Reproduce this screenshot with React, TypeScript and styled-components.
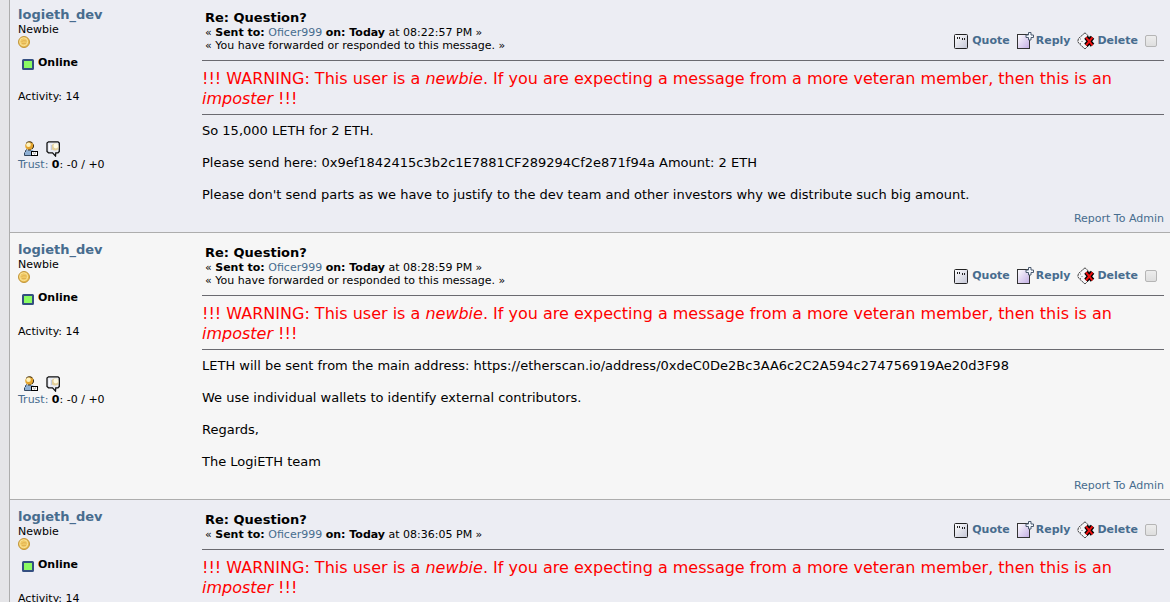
import React from 'react';
import styled, { createGlobalStyle } from 'styled-components';

const GlobalStyle = createGlobalStyle`
  html { overflow: hidden; }
  body {
    margin: 0;
    background: #e5e5e8;
    color: #000;
    font-family: Verdana, "DejaVu Sans", sans-serif;
    font-size: 13px;
    line-height: 16px;
  }
`;

const Page = styled.main`
  height: 100vh;
  overflow: hidden;
  padding-left: 9px;
`;

const Thread = styled.div`
  margin-top: -2px;
  border-left: 1px solid #adadad;
`;

const Post = styled.article<{ $alt?: boolean }>`
  display: flex;
  padding: 9px 6px 0 8px;
  background: ${(p) => (p.$alt ? '#f6f6f6' : '#ecedf3')};
  border-bottom: 1px solid #adadad;
`;

const Link = styled.a`
  color: #476c8e;
  text-decoration: none;
`;

const Poster = styled.aside`
  flex: 0 0 184px;
  font-size: 11px;
  line-height: 13px;
`;

const PosterName = styled(Link)`
  display: block;
  font-size: 13px;
  font-weight: bold;
  line-height: 16px;
`;

const Line = styled.div`
  line-height: 14px;
`;

const Rank = styled.div`
  line-height: 13px;
`;

const Coin = styled.svg`
  display: block;
`;

const Status = styled.div`
  display: flex;
  align-items: center;
  gap: 4px;
  margin: 7px 0 20px;
  padding-left: 4px;
  font-weight: bold;
  line-height: 14px;

  svg {
    margin-top: 4px;
  }
`;

const ProfileIcons = styled.div`
  display: flex;
  gap: 7px;
  margin: 37px 0 1px;
  padding-left: 5px;

  a, svg {
    display: block;
  }
`;

const Content = styled.div`
  flex: 1;
  min-width: 0;
`;

const Header = styled.header`
  display: flex;
  justify-content: space-between;
  align-items: flex-end;
  padding: 3px 0 8px 3px;
  border-bottom: 1px solid #6a6a70;
`;

const Title = styled.h2`
  margin: 0;
  font-size: 13px;
  line-height: 16px;
`;

const Meta = styled.div`
  font-size: 11px;
  line-height: 13px;
`;

const Actions = styled.div`
  display: flex;
  align-items: center;
  margin-bottom: 2px;
  font-size: 11px;
  font-weight: bold;
`;

const Action = styled(Link)`
  display: flex;
  align-items: center;
  gap: 2px;
  margin-right: 7px;

  svg {
    flex: none;
  }
`;

const Check = styled.input`
  appearance: none;
  box-sizing: border-box;
  width: 12px;
  height: 12px;
  margin: 0 7px 0 0;
  border: 1px solid #b5b5b5;
  border-radius: 2px;
  background: linear-gradient(#ededed, #dedede);
`;

const Warning = styled.p`
  margin: 0;
  padding: 8px 0 5px;
  border-bottom: 1px solid #6a6a70;
  color: #f00;
  font-size: 16px;
  line-height: 20px;
`;

const Body = styled.div`
  padding-top: 8px;

  p {
    margin: 0 0 16px;
  }

  p:last-child {
    margin-bottom: 8px;
  }
`;

const Report = styled.footer`
  padding-bottom: 5px;
  text-align: right;
  font-size: 11px;
`;

const CoinIcon = () => (
  <Coin width="12" height="12" viewBox="0 0 12 12" aria-hidden="true">
    <circle cx="6" cy="6" r="5.5" fill="#e9b94c" stroke="#c0963c" />
    <circle cx="5.7" cy="5.7" r="4" fill="#f0c964" stroke="#f9e39a" />
    <path d="M3.500 5.500q2-1.500 5-.5M4 7.500h4" fill="none" stroke="#e2b252" />
  </Coin>
);

const OnlineIcon = () => (
  <svg width="12" height="11" viewBox="0 0 12 11" aria-hidden="true">
    <rect x="1" y="1" width="10" height="9" rx="0.5" fill="#8bfb62" stroke="#344f80" strokeWidth="2" />
  </svg>
);

const ProfileIcon = () => (
  <svg width="16" height="16" viewBox="0 0 16 16" aria-hidden="true">
    <path d="M1.500 14.500V12l1.500-2.500 2-1h4l3 2.500v3.500z" fill="#8fb0d4" />
    <path d="M1.500 11.500v3h7M2.500 11V9.500l1.500-1" fill="none" stroke="#33465c" />
    <circle cx="6.500" cy="4.800" r="4.300" fill="#e3a32c" />
    <path d="M3 2.500A4.300 4.300 0 0 1 9.500 2M10.500 3.500A4.300 4.300 0 0 1 9 8M5 9h3" fill="none" stroke="#3a3222" />
    <circle cx="5.500" cy="3.800" r="2.300" fill="#fff3bd" />
    <rect x="8.500" y="10.500" width="6" height="4" fill="#fff" stroke="#000" />
    <path d="M10 12h1M12 12h1M11 13h1" stroke="#999" />
  </svg>
);

const MessageIcon = () => (
  <svg width="15" height="16" viewBox="0 0 15 16" aria-hidden="true">
    <path d="M2.500.8h9.500l1.300 1.200v8.500L12 11.800H9.800L9.500 15 6.500 11.800H2.500L1 10.500V2z" fill="#e9ebf3" stroke="#111" strokeWidth="1.300" />
    <circle cx="9" cy="6" r="3.600" fill="#e3cf9a" />
    <circle cx="9.800" cy="5" r="2.400" fill="#fffbe5" />
    <path d="M3.500 3.500v6" fill="none" stroke="#fff" />
    <path d="M5.500 4v5" fill="none" stroke="#c5cad8" />
  </svg>
);

const QuoteIcon = () => (
  <svg width="16" height="16" viewBox="0 0 16 16" aria-hidden="true">
    <defs>
      <linearGradient id="quoteFill" x1="0" y1="0" x2="1" y2="1">
        <stop offset="0" stopColor="#fff" />
        <stop offset="1" stopColor="#c4c6d6" />
      </linearGradient>
    </defs>
    <rect x=".5" y="1.500" width="13" height="14" rx="1" fill="url(#quoteFill)" stroke="#222" />
    <path d="M3.500 4v2M5.500 4v2M8.500 5v2M10.500 5v2" stroke="#222" />
  </svg>
);

const ReplyIcon = () => (
  <svg width="17" height="18" viewBox="0 0 17 18" aria-hidden="true">
    <defs>
      <linearGradient id="replyFill" x1="0" y1="0" x2="1" y2="1">
        <stop offset="0" stopColor="#fff" />
        <stop offset="1" stopColor="#c3aee4" />
      </linearGradient>
    </defs>
    <rect x=".5" y="2.500" width="12" height="14" fill="url(#replyFill)" stroke="#333" />
    <path d="M11.500.5h2.500v2.500h2.500v2.500h-2.500V8h-2.500V5.500H9V3h2.500z" fill="#f4f8ff" stroke="#4b5a6e" />
  </svg>
);

const DeleteIcon = () => (
  <svg width="18" height="18" viewBox="0 0 18 18" aria-hidden="true">
    <path d="M8 .8 1.500 6.500 .8 9.500l1.200 2L8 17l6-6V6.500z" fill="#f5f5f7" stroke="#444" strokeDasharray="2.500 .5" />
    <path d="M3.500 6.500v1M5 9v1M3.500 11v1" stroke="#777" />
    <path d="m9 5.300 6.500 8M15.500 5.300 9 13.300" stroke="#000" strokeWidth="4.600" />
    <path d="m9 5.300 6.500 8M15.500 5.300 9 13.300" stroke="#f01010" strokeWidth="2" />
  </svg>
);

interface Message {
  time: string;
  responded?: boolean;
  lines: string[];
}

const messages: Message[] = [
  {
    time: '08:22:57 PM',
    responded: true,
    lines: [
      'So 15,000 LETH for 2 ETH.',
      'Please send here: 0x9ef1842415c3b2c1E7881CF289294Cf2e871f94a Amount: 2 ETH',
      "Please don't send parts as we have to justify to the dev team and other investors why we distribute such big amount.",
    ],
  },
  {
    time: '08:28:59 PM',
    responded: true,
    lines: [
      'LETH will be sent from the main address: https://etherscan.io/address/0xdeC0De2Bc3AA6c2C2A594c274756919Ae20d3F98',
      'We use individual wallets to identify external contributors.',
      'Regards,',
      'The LogiETH team',
    ],
  },
  { time: '08:36:05 PM', lines: [] },
];

const PosterPanel = () => (
  <Poster>
    <PosterName href="#profile">logieth_dev</PosterName>
    <Rank>Newbie</Rank>
    <CoinIcon />
    <Status>
      <OnlineIcon />
      Online
    </Status>
    <Line>Activity: 14</Line>
    <ProfileIcons>
      <Link href="#profile" aria-label="View profile"><ProfileIcon /></Link>
      <Link href="#message" aria-label="Personal message"><MessageIcon /></Link>
    </ProfileIcons>
    <Line>
      <Link href="#trust">Trust:</Link> <b>0</b>: -0 / +0
    </Line>
  </Poster>
);

export default function App() {
  return (
    <>
      <GlobalStyle />
      <Page>
        <Thread>
          {messages.map((m, i) => (
            <Post key={m.time} $alt={i % 2 === 1}>
              <PosterPanel />
              <Content>
                <Header>
                  <div>
                    <Title>Re: Question?</Title>
                    <Meta>
                      « <b>Sent to:</b> <Link href="#user">Oficer999</Link> <b>on: Today</b> at {m.time} »
                    </Meta>
                    {m.responded && <Meta>« You have forwarded or responded to this message. »</Meta>}
                  </div>
                  <Actions>
                    <Action href="#quote"><QuoteIcon />Quote</Action>
                    <Action href="#reply"><ReplyIcon />Reply</Action>
                    <Action href="#delete"><DeleteIcon />Delete</Action>
                    <Check type="checkbox" aria-label={`Select message sent at ${m.time}`} />
                  </Actions>
                </Header>
                <Warning>
                  !!! WARNING: This user is a <i>newbie</i>. If you are expecting a message from a more veteran
                  member, then this is an <i>imposter</i> !!!
                </Warning>
                <Body>
                  {m.lines.map((line) => <p key={line}>{line}</p>)}
                </Body>
                <Report><Link href="#report">Report To Admin</Link></Report>
              </Content>
            </Post>
          ))}
        </Thread>
      </Page>
    </>
  );
}
